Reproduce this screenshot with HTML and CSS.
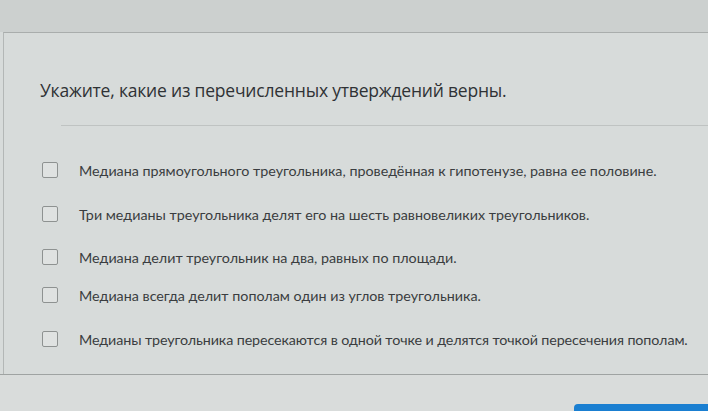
FILE: index.html
```html
<!DOCTYPE html>
<html lang="ru">
<head>
<meta charset="utf-8">
<link rel="stylesheet" href="styles.css">
</head>
<body>
<div class="page">
  <div class="topstrip"></div>
  <div class="card">
    <div class="question">Укажите, какие из перечисленных утверждений верны.</div>
    <div class="sep"></div>
    <ul class="options">
      <li class="opt"><span class="box"></span><span class="label">Медиана прямоугольного треугольника, проведённая к гипотенузе, равна ее половине.</span></li>
      <li class="opt"><span class="box"></span><span class="label">Три медианы треугольника делят его на шесть равновеликих треугольников.</span></li>
      <li class="opt"><span class="box"></span><span class="label">Медиана делит треугольник на два, равных по площади.</span></li>
      <li class="opt"><span class="box"></span><span class="label">Медиана всегда делит пополам один из углов треугольника.</span></li>
      <li class="opt"><span class="box"></span><span class="label">Медианы треугольника пересекаются в одной точке и делятся точкой пересечения пополам.</span></li>
    </ul>
  </div>
  <div class="footer">
    <div class="btn"></div>
  </div>
</div>
</body>
</html>
```
FILE: styles.css
```css
html, body {
  margin: 0;
  padding: 0;
}
body {
  width: 708px;
  height: 411px;
  overflow: hidden;
  background: #d7dbda;
  font-family: "Lato", "Open Sans", sans-serif;
  color: #3b3e41;
}
.page {
  display: flex;
  flex-direction: column;
  height: 411px;
}
.topstrip {
  height: 32px;
  background: #ccd0cf;
}
.card {
  margin-left: 3px;
  border-top: 1px solid #a9adac;
  border-left: 1px solid #b3b7b6;
  background: #d7dbda;
  padding-top: 46px;
  padding-bottom: 27px;
}
.question {
  font-family: "Open Sans", sans-serif;
  font-size: 17.5px;
  line-height: 22px;
  padding-left: 36px;
  color: #2f3235;
  letter-spacing: -0.2px;
}
.sep {
  margin-top: 24px;
  margin-left: 57px;
  border-top: 1px solid #bfc3c2;
}
.options {
  list-style: none;
  margin: 0;
  padding: 36px 0 0 38px;
  display: flex;
  flex-direction: column;
  gap: 28px;
}
.opt {
  display: flex;
  align-items: center;
  height: 16px;
}
.opt:nth-child(3) { margin-top: -1px; }
.opt:nth-child(4) { margin-top: -6px; }
.box {
  width: 14px;
  height: 14px;
  border: 1px solid #8e9291;
  border-radius: 2px;
  background: #dfe2e1;
  flex: none;
}
.label {
  margin-left: 21px;
  font-size: 14.3px;
  color: #3a3d40;
  white-space: nowrap;
}
.opt:nth-child(5) .label { letter-spacing: -0.1px; }
.footer {
  border-top: 1px solid #9fa3a2;
  flex: 1;
  display: flex;
  justify-content: flex-end;
  align-items: flex-end;
  background: #d9dcdb;
}
.btn {
  width: 134px;
  height: 7px;
  background: #1a7fd1;
  border-radius: 4px 0 0 0;
}
```
